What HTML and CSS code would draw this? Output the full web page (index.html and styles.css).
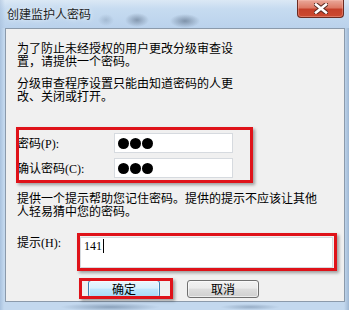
FILE: index.html
```html
<!DOCTYPE html>
<html lang="zh-CN">
<head>
<meta charset="utf-8">
<title>创建监护人密码</title>
<link rel="stylesheet" href="styles.css">
</head>
<body>
<div class="window">
  <div class="titlebar">
    <span class="title">创建监护人密码</span>
    <div class="close">
      <svg width="14" height="11" viewBox="0 0 14 11">
        <path d="M2 1.5 L12 9.5 M12 1.5 L2 9.5" stroke="#5b2a22" stroke-width="4.6" stroke-linecap="square" fill="none"/>
        <path d="M2 1.5 L12 9.5 M12 1.5 L2 9.5" stroke="#ffffff" stroke-width="2.6" stroke-linecap="square" fill="none"/>
      </svg>
    </div>
  </div>
  <div class="panel">
    <p class="para narrow">为了防止未经授权的用户更改分级审查设置，请提供一个密码。</p>
    <p class="para narrow second">分级审查程序设置只能由知道密码的人更改、关闭或打开。</p>
    <div class="pwgroup">
      <div class="row">
        <span class="label">密码<span class="latin">(P):</span></span>
        <div class="input"><span class="dot"></span><span class="dot"></span><span class="dot"></span></div>
      </div>
      <div class="row">
        <span class="label">确认密码<span class="latin">(C):</span></span>
        <div class="input"><span class="dot"></span><span class="dot"></span><span class="dot"></span></div>
      </div>
      <div class="mark mark-pw"></div>
    </div>
    <p class="para wide">提供一个提示帮助您记住密码。提供的提示不应该让其他人轻易猜中您的密码。</p>
    <div class="hintrow">
      <span class="label hintlabel">提示<span class="latin">(H):</span></span>
      <div class="hintwrap">
        <div class="hintinput"><span class="latin">141</span><span class="caret"></span></div>
        <div class="mark mark-hint"></div>
      </div>
    </div>
    <div class="buttons">
      <div class="okwrap">
        <div class="btn ok">确定</div>
        <div class="mark mark-ok"></div>
      </div>
      <div class="btn cancel">取消</div>
    </div>
  </div>
</div>
</body>
</html>
```
FILE: styles.css
```css
* {
  box-sizing: border-box;
  margin: 0;
  padding: 0;
}

body {
  margin: 0;
  width: 349px;
  height: 310px;
  overflow: hidden;
  font-family: "Noto Sans CJK SC", sans-serif;
  font-size: 12px;
  color: #000;
  background: #b9d1ea;
}

.window {
  width: 349px;
  height: 310px;
  display: flex;
  flex-direction: column;
  padding: 0 4px 8px 5px;
  background:
    radial-gradient(ellipse 50px 4px at 110px 307px, rgba(70, 95, 125, 0.45), rgba(70, 95, 125, 0)),
    radial-gradient(ellipse 30px 3px at 250px 307px, rgba(70, 95, 125, 0.35), rgba(70, 95, 125, 0)),
    linear-gradient(90deg, #a9c2de 0px, #c3d8ee 4px, #c3d8ee 344px, #9fb8d4 349px);
}

.titlebar {
  height: 28px;
  display: flex;
  align-items: flex-start;
  margin: 0 -4px 0 -5px;
  padding: 0 5px 0 7px;
  background:
    radial-gradient(ellipse 12px 7px at 137px 20px, rgba(75, 92, 115, 0.5), rgba(75, 92, 115, 0)),
    radial-gradient(ellipse 15px 7px at 185px 21px, rgba(75, 92, 115, 0.55), rgba(75, 92, 115, 0)),
    radial-gradient(ellipse 8px 6px at 106px 20px, rgba(95, 115, 140, 0.28), rgba(95, 115, 140, 0)),
    linear-gradient(90deg, rgba(160, 185, 215, 0.5) 0px, rgba(160, 185, 215, 0) 5px),
    linear-gradient(#dbe8f5 0px, #c6dbf0 9px, #bad2ec 28px);
}

.title {
  line-height: 28px;
  color: #1f1f1f;
  text-shadow: 0 0 5px rgba(255, 255, 255, 0.9);
}

.close {
  margin-left: auto;
  width: 47px;
  height: 18px;
  border: 1px solid #6b2b22;
  border-top: none;
  border-radius: 0 0 4px 4px;
  background: linear-gradient(#eaa89a 0%, #dd7a66 45%, #c5402a 55%, #cc4a30 100%);
  box-shadow: inset 0 0 0 1px rgba(255, 200, 190, 0.35);
  display: flex;
  align-items: center;
  justify-content: center;
}

.close svg {
  display: block;
}

.panel {
  flex: 1;
  background: #f0f0f0;
  border: 1px solid #8b9aab;
  padding: 12px 0 0 11px;
  display: flex;
  flex-direction: column;
}

.para {
  line-height: 13px;
}

.latin {
  font-family: "Liberation Serif", "Noto Sans CJK SC", serif;
}

.narrow {
  width: 220px;
}

.second {
  margin-top: 9px;
}

.wide {
  width: 305px;
  margin-top: 13px;
}

.pwgroup {
  margin-top: 31px;
  position: relative;
  width: 216px;
  display: flex;
  flex-direction: column;
  gap: 5px;
}

.row {
  display: flex;
  align-items: center;
  height: 20px;
}

.label {
  line-height: 13px;
  width: 97px;
  flex: none;
}

.input {
  width: 119px;
  height: 20px;
  background: #fff;
  border: 1px solid #d6dadf;
  padding-left: 3px;
  display: flex;
  align-items: center;
  gap: 1px;
}

.dot {
  width: 11px;
  height: 11px;
  border-radius: 50%;
  background: #000;
}

.mark {
  position: absolute;
  border: 3px solid #df1219;
  box-shadow: 2px 2px 3px rgba(0, 0, 0, 0.35);
  pointer-events: none;
}

.mark-pw {
  left: -1px;
  top: -6px;
  right: -20px;
  bottom: -5px;
}

.hintrow {
  margin-top: 20px;
  display: flex;
  align-items: flex-start;
}

.hintlabel {
  width: 63px;
  margin-top: -2px;
}

.hintwrap {
  position: relative;
  width: 253px;
  height: 31px;
}

.hintinput {
  width: 100%;
  height: 100%;
  background: #fff;
  border: 1px solid #d6dadf;
  padding: 1px 3px;
  line-height: 14px;
  display: flex;
  align-items: flex-start;
}

.caret {
  display: inline-block;
  width: 1px;
  height: 14px;
  background: #000;
  margin-left: 1px;
}

.mark-hint {
  left: -3px;
  top: -4px;
  right: -4px;
  bottom: -3px;
}

.buttons {
  margin-top: 12px;
  margin-left: 71px;
  display: flex;
  align-items: center;
  gap: 27px;
}

.okwrap {
  position: relative;
}

.btn {
  width: 72px;
  height: 18px;
  border-radius: 3px;
  line-height: 16px;
  text-align: center;
}

.ok {
  border: 1px solid #3c7fb1;
  background: linear-gradient(#eaf6fd 0%, #d9f0fc 45%, #bee6fd 50%, #a7d9f5 100%);
  box-shadow: inset 0 0 0 1px rgba(255, 255, 255, 0.55);
}

.cancel {
  border: 1px solid #707070;
  background: linear-gradient(#f2f2f2 0%, #ebebeb 45%, #dddddd 50%, #cfcfcf 100%);
  box-shadow: inset 0 0 0 1px rgba(255, 255, 255, 0.6);
  margin-top: -1px;
}

.mark-ok {
  left: -9px;
  top: -2px;
  right: -13px;
  bottom: -1px;
}
```
